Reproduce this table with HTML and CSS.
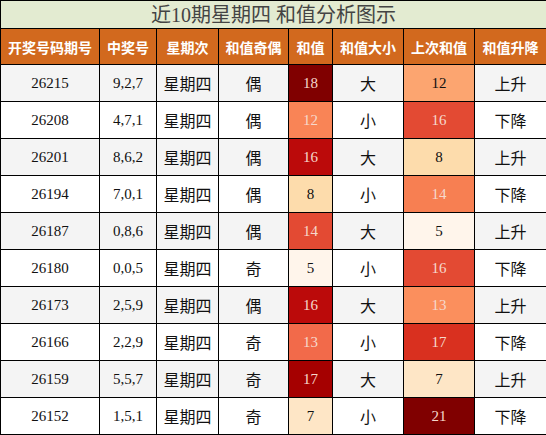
FILE: index.html
```html
<!DOCTYPE html>
<html lang="zh-CN">
  <head>
    <meta charset="UTF-8" />
    <meta name="viewport" content="width=device-width, initial-scale=1.0" />
    <title>和值分析图示</title>
    <link rel="stylesheet" href="styles.css">
  </head>
  <body>
    <table class="sum-table">
      <colgroup>
        <col class="c-issue">
        <col class="c-nums">
        <col class="c-day">
        <col class="c-odd">
        <col class="c-sum">
        <col class="c-size">
        <col class="c-prev">
        <col class="c-trend">
      </colgroup>
      <thead>
        <tr class="title-row">
          <th colspan="8">近10期星期四 和值分析图示</th>
        </tr>
        <tr class="head-row">
          <th>开奖号码期号</th>
          <th>中奖号</th>
          <th>星期次</th>
          <th>和值奇偶</th>
          <th>和值</th>
          <th>和值大小</th>
          <th>上次和值</th>
          <th>和值升降</th>
        </tr>
      </thead>
      <tbody>
        <tr>
          <td>26215</td><td>9,2,7</td><td class="cjk">星期四</td><td class="cjk">偶</td>
          <td class="heat h-800000 light">18</td><td class="cjk">大</td>
          <td class="heat h-fca570">12</td><td class="cjk">上升</td>
        </tr>
        <tr>
          <td>26208</td><td>4,7,1</td><td class="cjk">星期四</td><td class="cjk">偶</td>
          <td class="heat h-f98456 light">12</td><td class="cjk">小</td>
          <td class="heat h-e34a33 light">16</td><td class="cjk">下降</td>
        </tr>
        <tr>
          <td>26201</td><td>8,6,2</td><td class="cjk">星期四</td><td class="cjk">偶</td>
          <td class="heat h-bb0a0a light">16</td><td class="cjk">大</td>
          <td class="heat h-fddcac">8</td><td class="cjk">上升</td>
        </tr>
        <tr>
          <td>26194</td><td>7,0,1</td><td class="cjk">星期四</td><td class="cjk">偶</td>
          <td class="heat h-fddcac">8</td><td class="cjk">小</td>
          <td class="heat h-f77f52 light">14</td><td class="cjk">下降</td>
        </tr>
        <tr>
          <td>26187</td><td>0,8,6</td><td class="cjk">星期四</td><td class="cjk">偶</td>
          <td class="heat h-e34a33 light">14</td><td class="cjk">大</td>
          <td class="heat h-fff5eb">5</td><td class="cjk">上升</td>
        </tr>
        <tr>
          <td>26180</td><td>0,0,5</td><td class="cjk">星期四</td><td class="cjk">奇</td>
          <td class="heat h-fff5eb">5</td><td class="cjk">小</td>
          <td class="heat h-e34a33 light">16</td><td class="cjk">下降</td>
        </tr>
        <tr>
          <td>26173</td><td>2,5,9</td><td class="cjk">星期四</td><td class="cjk">偶</td>
          <td class="heat h-bb0a0a light">16</td><td class="cjk">大</td>
          <td class="heat h-fb8f5d light">13</td><td class="cjk">上升</td>
        </tr>
        <tr>
          <td>26166</td><td>2,2,9</td><td class="cjk">星期四</td><td class="cjk">奇</td>
          <td class="heat h-f26a4a light">13</td><td class="cjk">小</td>
          <td class="heat h-d9301f light">17</td><td class="cjk">下降</td>
        </tr>
        <tr>
          <td>26159</td><td>5,5,7</td><td class="cjk">星期四</td><td class="cjk">奇</td>
          <td class="heat h-a50000 light">17</td><td class="cjk">大</td>
          <td class="heat h-fee6c6">7</td><td class="cjk">上升</td>
        </tr>
        <tr>
          <td>26152</td><td>1,5,1</td><td class="cjk">星期四</td><td class="cjk">奇</td>
          <td class="heat h-fee6c6">7</td><td class="cjk">小</td>
          <td class="heat h-800000 light">21</td><td class="cjk">下降</td>
        </tr>
      </tbody>
    </table>
  </body>
</html>
```

FILE: styles.css
```css
body {
  margin: 0;
  padding: 0;
  background-color: #fff;
  font-family: "Liberation Serif", "Noto Sans CJK SC", serif;
}

.sum-table {
  width: 546px;
  border-collapse: collapse;
  table-layout: fixed;
  color: #111;
}

.c-issue { width: 99px; }
.c-nums { width: 57px; }
.c-day { width: 62px; }
.c-odd { width: 70px; }
.c-sum { width: 44px; }
.c-size { width: 71px; }
.c-prev { width: 71px; }
.c-trend { width: 72px; }

.sum-table th,
.sum-table td {
  border: 1px solid #000;
  padding: 0;
  text-align: center;
  white-space: nowrap;
}

.title-row th {
  height: 27px;
  background-color: #e3ebd1;
  color: #444;
  font-size: 20px;
  font-weight: normal;
  line-height: 26px;
}

.head-row th {
  height: 35px;
  background-color: #d2691e;
  color: #fff;
  font-family: "Noto Sans CJK SC", sans-serif;
  font-size: 14px;
  font-weight: bold;
}

.sum-table td {
  height: 36px;
  font-size: 15px;
}

.sum-table tbody tr:nth-child(odd) td {
  background-color: #f4f4f4;
}

.sum-table tbody tr:nth-child(even) td {
  background-color: #fff;
}

.sum-table td.cjk {
  font-family: "Noto Sans CJK SC", sans-serif;
  font-size: 16px;
}

.sum-table td.light {
  color: #f6d8cc;
}

.sum-table tbody tr td.h-800000 { background-color: #800000; }
.sum-table tbody tr td.h-a50000 { background-color: #a50000; }
.sum-table tbody tr td.h-bb0a0a { background-color: #bb0a0a; }
.sum-table tbody tr td.h-d9301f { background-color: #d9301f; }
.sum-table tbody tr td.h-e34a33 { background-color: #e34a33; }
.sum-table tbody tr td.h-f26a4a { background-color: #f26a4a; }
.sum-table tbody tr td.h-f77f52 { background-color: #f77f52; }
.sum-table tbody tr td.h-f98456 { background-color: #f98456; }
.sum-table tbody tr td.h-fb8f5d { background-color: #fb8f5d; }
.sum-table tbody tr td.h-fca570 { background-color: #fca570; }
.sum-table tbody tr td.h-fddcac { background-color: #fddcac; }
.sum-table tbody tr td.h-fee6c6 { background-color: #fee6c6; }
.sum-table tbody tr td.h-fff5eb { background-color: #fff5eb; }
```
